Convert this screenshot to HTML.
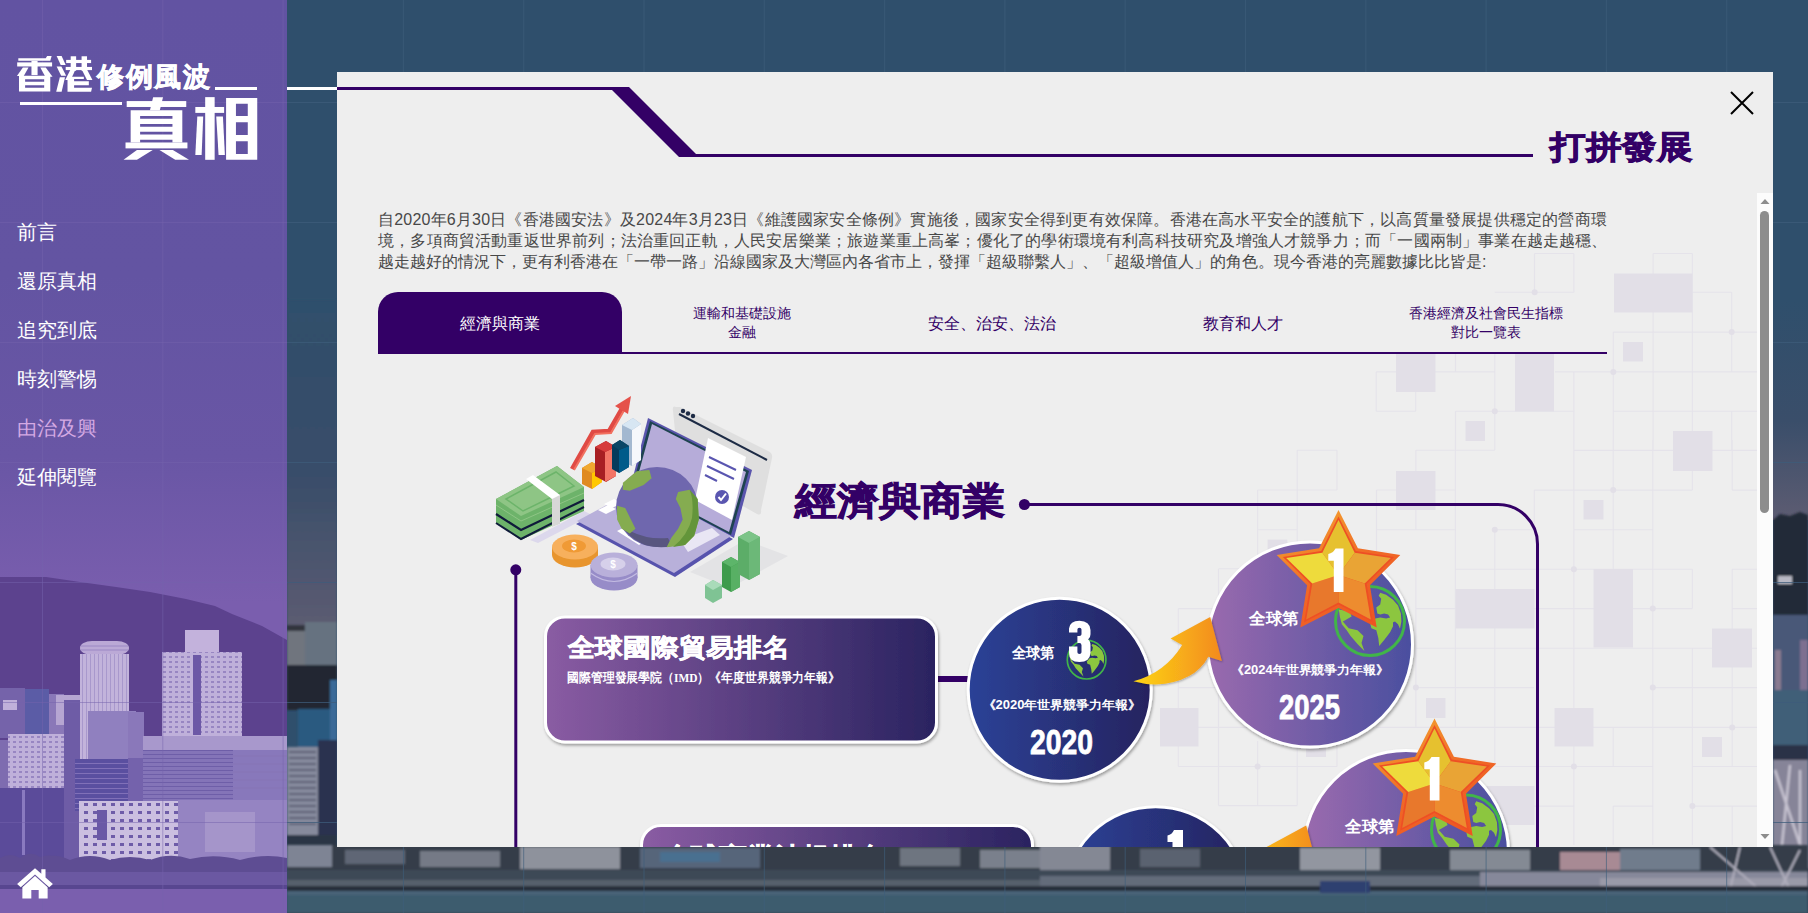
<!DOCTYPE html>
<html lang="zh-Hant">
<head>
<meta charset="utf-8">
<style>
*{box-sizing:border-box;margin:0;padding:0}
html,body{width:1808px;height:913px;overflow:hidden}
body{position:relative;background:#2f4f6c;font-family:"Liberation Sans",sans-serif}
.abs{position:absolute}
#side{left:0;top:0;width:287px;height:913px;background:linear-gradient(#6253a2 0%,#6354a2 30%,#6956a5 50%,#7a5eae 66%);overflow:hidden}
.nav{position:absolute;left:17px;color:#fff;font-size:20px;line-height:22px;white-space:nowrap}
#modal{left:337px;top:72px;width:1436px;height:775px;background:#eeeeee;overflow:hidden}
.para{position:absolute;left:41px;color:#484848;font-size:16px;line-height:21px;white-space:nowrap}
.tab{position:absolute;top:220px;height:62px;color:#330066;text-align:center;white-space:nowrap}
</style>
</head>
<body>
<!-- right background -->
<svg class="abs" style="left:0;top:0" width="1808" height="913" viewBox="0 0 1808 913">
  <defs>
    <filter id="bl1"><feGaussianBlur stdDeviation="1.2"/></filter>
    <pattern id="g1" x="42" y="102" width="120.3" height="120" patternUnits="userSpaceOnUse">
      <path d="M0 0V120M0 0H120.3" stroke="#3d5c7a" stroke-width="1.3" fill="none"/>
    </pattern>
  </defs>
  <linearGradient id="skyR" x1="0" y1="0" x2="0" y2="1"><stop offset="0" stop-color="#2f4f6c"/><stop offset="0.55" stop-color="#3a4e6a"/><stop offset="1" stop-color="#5d5c72"/></linearGradient>
  <rect x="1773" y="300" width="35" height="220" fill="url(#skyR)"/>
  <g filter="url(#bl1)">
  <!-- right strip city -->
  <path d="M1773 520 L1780 514 L1790 516 L1800 512 L1808 515 L1808 913 L1773 913Z" fill="#242a38"/>
  <rect x="1778" y="576" width="14" height="8" fill="#b8b8c4"/>
  <rect x="1773" y="615" width="35" height="78" fill="#4a5878"/>
  <rect x="1775" y="650" width="6" height="40" fill="#8a7a90"/>
  <rect x="1800" y="640" width="8" height="50" fill="#7d7090"/>
  <rect x="1773" y="690" width="35" height="55" fill="#3f5f78"/>
  <rect x="1773" y="745" width="35" height="15" fill="#2a3346"/>
  <rect x="1773" y="760" width="35" height="110" fill="#868498"/>
  <path d="M1775 770 L1805 860 M1790 765 L1780 865 M1800 770 L1800 865" stroke="#c6c2d0" stroke-width="2.5"/>
  <rect x="1773" y="868" width="35" height="22" fill="#2c3242"/>
  <!-- left strip city -->
  <rect x="287" y="300" width="50" height="330" fill="url(#skyR)"/>
  <rect x="287" y="625" width="18" height="45" fill="#70747e"/>
  <rect x="287" y="625" width="18" height="6" fill="#30343c"/>
  <rect x="305" y="622" width="32" height="45" fill="#667280"/>
  <rect x="287" y="665" width="50" height="45" fill="#212830"/>
  <rect x="298" y="709" width="34" height="40" fill="#2c5a80"/>
  <rect x="330" y="680" width="7" height="70" fill="#3a6a98"/>
  <rect x="287" y="747" width="31" height="103" fill="#868a9c"/>
  <path d="M289 752H316M289 758H316M289 764H316M289 770H316M289 776H316M289 782H316M289 788H316M289 794H316M289 800H316M289 806H316M289 812H316M289 818H316M289 824H316" stroke="#5a5e74" stroke-width="2"/>
  <rect x="318" y="740" width="19" height="110" fill="#2a3050"/>
  <rect x="287" y="835" width="50" height="15" fill="#2c3444"/>
  </g>
  <!-- bottom strip -->
  <g filter="url(#bl1)">
  <rect x="287" y="845" width="1521" height="70" fill="#343e4a"/>
  <rect x="287" y="845" width="45" height="22" fill="#7e8494"/>
  <rect x="345" y="850" width="60" height="14" fill="#5e6674"/>
  <rect x="420" y="851" width="80" height="16" fill="#747a86"/>
  <rect x="520" y="847" width="100" height="22" fill="#8e929c"/>
  <rect x="640" y="848" width="120" height="20" fill="#56657a"/>
  <rect x="660" y="852" width="60" height="10" fill="#4a7090"/>
  <rect x="900" y="848" width="60" height="18" fill="#6e7480"/>
  <rect x="980" y="850" width="60" height="18" fill="#7a808c"/>
  <rect x="1040" y="846" width="70" height="24" fill="#848894"/>
  <rect x="1140" y="849" width="60" height="18" fill="#5a6270"/>
  <rect x="1300" y="848" width="80" height="24" fill="#9296a0"/>
  <rect x="1450" y="850" width="80" height="22" fill="#848a94"/>
  <rect x="1560" y="852" width="60" height="22" fill="#a88a94"/>
  <rect x="1620" y="849" width="80" height="22" fill="#707c8c"/>
  <rect x="287" y="870" width="1521" height="16" fill="#3e4856"/>
  <rect x="287" y="880" width="760" height="6" fill="#56606c"/>
  <rect x="1040" y="876" width="440" height="12" fill="#646c7a"/>
  <rect x="1480" y="872" width="328" height="20" fill="#86889a"/>
  <rect x="1600" y="878" width="208" height="12" fill="#9a9aa8"/>
  <path d="M1710 847 L1760 890 M1740 847 L1730 890 M1770 847 L1790 890 M1800 850 L1780 890" stroke="#b0aebc" stroke-width="2"/>
  <rect x="287" y="886" width="1521" height="5" fill="#262f3a"/>
  <rect x="287" y="891" width="1521" height="22" fill="#3e5c6e"/>
  <rect x="287" y="891" width="1521" height="4" fill="#4a6478"/>
  <rect x="1320" y="881" width="50" height="12" fill="#2d4070"/>
  </g>
  <rect x="287" y="0" width="1521" height="913" fill="url(#g1)"/>
</svg>

<!-- sidebar -->
<div id="side" class="abs">
  <svg class="abs" style="left:0;top:0" width="287" height="913" viewBox="0 0 287 913">
    <defs>
      <pattern id="g2" x="42" y="102" width="120.3" height="120" patternUnits="userSpaceOnUse">
        <path d="M0 0V120M0 0H120.3" stroke="#7462ac" stroke-width="1" fill="none"/>
      </pattern>
    </defs>
    <pattern id="win1" width="6" height="5" patternUnits="userSpaceOnUse"><rect width="6" height="5" fill="#bfb0da"/><rect x="1" y="1" width="3" height="2" fill="#9886c2"/></pattern>
    <pattern id="win2" width="5" height="4" patternUnits="userSpaceOnUse"><rect width="5" height="4" fill="#8474b8"/><rect x="0" y="2" width="5" height="1" fill="#6e5ea8"/></pattern>
    <pattern id="win5" width="5" height="5" patternUnits="userSpaceOnUse"><rect width="5" height="5" fill="#5a4fa0"/><rect x="0" y="3" width="5" height="1" fill="#8070b8"/></pattern>
    <pattern id="win3" width="4" height="60" patternUnits="userSpaceOnUse"><rect width="4" height="60" fill="#c2b3db"/><rect x="2" width="1" height="60" fill="#a898cc"/></pattern>
    <pattern id="win4" width="9" height="8" patternUnits="userSpaceOnUse"><rect width="9" height="8" fill="#cbbfe0"/><rect x="3" y="3" width="4" height="3" fill="#6e5ca8"/></pattern>
    <!-- mountain -->
    <path d="M0 577 L46 577 L80 582 L116 587 L150 592 L186 599 L215 606 L232 614 L262 626 L287 640 L287 913 L0 913Z" fill="#5c428e"/>
    <!-- left cluster -->
    <rect x="0" y="688" width="25" height="50" fill="#7563aa"/>
    <rect x="3" y="700" width="14" height="10" fill="#c0b0da"/>
    <rect x="25" y="689" width="24" height="45" fill="#5b5ca6"/>
    <rect x="49" y="694" width="15" height="40" fill="#8a78b8"/>
    <rect x="56" y="695" width="26" height="30" fill="#b6a6d2"/>
    <rect x="8" y="734" width="56" height="56" fill="url(#win1)"/>
    <rect x="0" y="740" width="8" height="50" fill="#7e6cb0"/>
    <rect x="0" y="788" width="64" height="70" fill="#5b4b9a"/>
    <rect x="22" y="790" width="3" height="65" fill="#8a7ac0"/>
    <rect x="64" y="700" width="16" height="160" fill="#6e5ca6"/>
    <!-- round tower -->
    <rect x="80" y="641" width="49" height="14" rx="12" fill="#bba9d6"/>
    <path d="M81 646 H128 M81 650 H128" stroke="#9b88c4" stroke-width="1"/>
    <rect x="80" y="654" width="49" height="108" fill="url(#win3)"/>
    <rect x="88" y="711" width="48" height="50" fill="#9080bf"/>
    <rect x="128" y="712" width="16" height="48" fill="#8a78ba"/>
    <rect x="75" y="759" width="53" height="52" fill="url(#win5)"/>
    <rect x="128" y="758" width="15" height="50" fill="#7462ac"/>
    <!-- tall tower right -->
    <rect x="185" y="630" width="34" height="22" fill="#c3b2dc"/>
    <rect x="162" y="652" width="80" height="84" fill="url(#win1)"/>
    <rect x="193" y="655" width="8" height="80" fill="#6c58a6"/>
    <!-- wide lower building -->
    <rect x="143" y="736" width="147" height="14" fill="#a898cc"/>
    <rect x="143" y="750" width="90" height="52" fill="url(#win2)"/>
    <rect x="233" y="750" width="57" height="52" fill="#8878bb"/>
    <path d="M233 756 H287 M233 764 H287 M233 772 H287 M233 780 H287 M233 788 H287" stroke="#8676b8" stroke-width="1.5"/>
    <!-- white building -->
    <rect x="79" y="801" width="100" height="62" fill="url(#win4)"/>
    <rect x="97" y="810" width="10" height="30" fill="#6a58a6"/>
    <rect x="178" y="800" width="112" height="60" fill="#9584c2"/>
    <rect x="205" y="812" width="50" height="40" fill="#a595ca"/>
    <!-- trees / shore / water -->
    <path d="M0 858 Q10 852 20 858 Q30 850 40 857 Q55 853 70 860 Q90 852 110 860 Q130 854 150 860 Q170 852 190 859 Q215 853 240 860 Q265 853 287 858 V875 H0Z" fill="#5e4d93"/>
    <rect x="0" y="872" width="287" height="14" fill="#6b58a2"/>
    <rect x="0" y="885" width="287" height="4" fill="#584690"/>
    <rect x="0" y="889" width="287" height="24" fill="#7a5fae"/>
    <rect x="0" y="0" width="287" height="913" fill="url(#g2)"/>
  </svg>
  <!-- logo -->
  <svg class="abs" style="left:14px;top:54px" width="82" height="41" viewBox="0 0 1808 904" preserveAspectRatio="none">
    <g fill="#fff">
    <path d="M95 95 H700 L730 45 H830 L800 150 H95Z"/>
    <rect x="70" y="185" width="770" height="90"/>
    <rect x="385" y="150" width="135" height="315"/>
    <path d="M195 300 H320 L215 485 H65Z"/>
    <path d="M580 300 H700 L850 500 H690Z"/>
    <path d="M110 480 H800 V825 H110Z M245 555 V610 H665 V555Z M245 690 V745 H665 V690Z" fill-rule="evenodd"/>
    <path d="M940 45 H1050 L1140 240 H1030Z"/>
    <path d="M940 275 H1045 L1150 480 H1040Z"/>
    <path d="M1010 510 H1125 L1050 830 H930Z"/>
    <rect x="1250" y="50" width="120" height="320"/>
    <rect x="1490" y="50" width="120" height="320"/>
    <rect x="1150" y="130" width="550" height="70"/>
    <rect x="1140" y="285" width="580" height="70"/>
    <path d="M1240 355 H1350 L1250 575 H1130Z"/>
    <path d="M1500 355 H1615 L1730 575 H1610Z"/>
    <path d="M1180 500 H1540 V600 H1650 V690 H1325 V745 H1720 L1700 830 H1180Z M1325 550 V600 H1540 V550Z" fill-rule="evenodd"/>
    </g>
  </svg>
  <div class="abs" style="left:97px;top:59px;color:#fff;font-size:27px;font-weight:bold;line-height:36px;white-space:nowrap;-webkit-text-stroke:0.6px #fff;letter-spacing:1.5px">修例風波</div>
  <div class="abs" style="left:215px;top:86.5px;width:42px;height:3px;background:#fff"></div>
  <div class="abs" style="left:20px;top:101.5px;width:102px;height:3px;background:#fff"></div>
  <svg class="abs" style="left:120px;top:92px" width="140" height="72" viewBox="0 0 1775 913" preserveAspectRatio="none">
    <g fill="#fff">
    <path d="M420 65 H545 L505 230 H380Z"/>
    <rect x="85" y="115" width="755" height="75"/>
    <path d="M135 230 H790 V640 H135Z M255 305 V340 H665 V305Z M255 405 V440 H665 V405Z M255 505 V540 H665 V505Z M255 605 V640 H665 V605Z" fill-rule="evenodd"/>
    <rect x="70" y="640" width="785" height="75"/>
    <path d="M215 735 H415 L215 860 H45Z"/>
    <path d="M500 735 H670 L875 860 H700Z"/>
    <rect x="1080" y="65" width="120" height="795"/>
    <rect x="955" y="190" width="365" height="75"/>
    <path d="M980 310 H1055 L1035 800 H955Z"/>
    <path d="M1220 310 H1305 L1330 800 H1250Z"/>
    <path d="M1345 75 H1740 V860 H1345Z M1470 150 V305 H1620 V150Z M1470 385 V545 H1620 V385Z M1470 625 V785 H1620 V625Z" fill-rule="evenodd"/>
    </g>
  </svg>
  <!-- nav -->
  <div class="nav" style="top:221px">前言</div>
  <div class="nav" style="top:270px">還原真相</div>
  <div class="nav" style="top:319px">追究到底</div>
  <div class="nav" style="top:368px">時刻警惕</div>
  <div class="nav" style="top:417px;color:#d4a9e3">由治及興</div>
  <div class="nav" style="top:466px">延伸閱覽</div>
  <!-- home icon -->
  <svg class="abs" style="left:15px;top:866px" width="40" height="34" viewBox="0 0 38 32" preserveAspectRatio="none">
    <path d="M19 2 L2 17 L5.5 20 L19 8 L32.5 20 L36 17 L29 10.8 V3 H25 V7.2 Z" fill="#fff"/>
    <path d="M7 20 L19 9.5 L31 20 V30.5 H22.5 V22.5 H15.5 V30.5 H7 Z" fill="#fff"/>
  </svg>
</div>

<!-- connector white line -->
<div class="abs" style="left:287px;top:87px;width:50px;height:3px;background:#fff"></div>

<!-- modal -->
<div id="modal" class="abs">
  <!-- bg pattern -->
  <svg class="abs" style="left:0;top:0" width="1436" height="775" viewBox="337 72 1436 775">
    <path d="M1534.5 253.5V292.2M1573.9 253.5V292.2M1573.9 371.9V450M1653.1 253.5V450M1692.4 253.5V450M1731.7 292.2V371.9M1731.7 411.2V450M1613.3 332.1V450M1455.5 354V371.9M1455.5 411.2V450M1494.8 354V450M1415.7 371.9V411.2M1376.2 371.9V411.2M1297.2 450.3V545M1337 450.3V490.1M1257.6 490V560M1376.5 490V560M1415.9 450V529.7M1455.4 440V650M1218.5 569V805.6M1178.3 608.6V766.5M1415.9 560V650M1494.8 529.7V650M1534.3 490V529M1573.9 440V650M1613.2 440V569.3M1652.8 440V650M1692.4 470V490M1692.4 569.3V608.6M1732.2 440V490M1732.2 569.3V650M1455.4 640V727.4M1494.8 640V766.5M1573.9 640V845M1613.2 727.4V766.5M1613.2 806V845M1652.8 640V845M1692.4 648V845M1732.2 667V766.5M1732.2 806V845M1257.6 741V805.6M1297.2 727V805.6M1337 727V766.5M1415.9 648V727M1455.4 648V727M1534.5 253.5H1573.9M1653.1 253.5H1692.4M1494.8 292.2H1573.9M1692.4 292.2H1731.7M1613.3 332.1H1757M1376.2 371.9H1494.8M1555 371.9H1757M1376.2 411.2H1415.7M1455.5 411.2H1573.8M1613.3 411.2H1757M1297.2 450.3H1337M1415.9 450.3H1494.8M1257.6 490H1337M1376.5 490H1455.4M1257.6 529.7H1297.2M1376.5 529.7H1455.4M1178.3 608.6H1218.5M1218.5 568.8H1257.6M1415.9 608.6H1455.4M1573.9 450.4H1757M1534.3 490.1H1692.4M1732.2 490.1H1757M1494.8 529.7H1534M1573.9 529.7H1652.8M1455.4 569.3H1692.4M1732 569.3H1757M1455.4 608.6H1692.4M1732 608.6H1757M1415.9 648.2H1757M1415.9 687.6H1534M1652.8 687.6H1757M1376 727.4H1757M1494.8 766.5H1652.8M1692.4 766.5H1757M1534 806.1H1573.9M1613.2 806.1H1652.8M1692.4 806.1H1757M1178.3 687.6H1218M1178.3 727.4H1257.6M1178.3 766.5H1337M1218.5 805.6H1297.2" stroke="#e5e3ea" stroke-width="1.1" fill="none"/>
    <circle cx="1534.7" cy="292.2" r="3" fill="#e2dfe7"/><circle cx="1731.7" cy="332.1" r="3" fill="#e2dfe7"/><circle cx="1613.3" cy="371.9" r="3" fill="#e2dfe7"/><circle cx="1494.8" cy="411.2" r="3" fill="#e2dfe7"/><circle cx="1494.8" cy="529.7" r="3" fill="#e2dfe7"/><circle cx="1573.9" cy="569.3" r="3" fill="#e2dfe7"/><circle cx="1613.2" cy="490.1" r="3" fill="#e2dfe7"/><circle cx="1652.8" cy="608.6" r="3" fill="#e2dfe7"/><circle cx="1652.8" cy="687.6" r="3" fill="#e2dfe7"/><circle cx="1732.2" cy="727.4" r="3" fill="#e2dfe7"/><circle cx="1573.9" cy="766.5" r="3" fill="#e2dfe7"/><circle cx="1692.4" cy="806.1" r="3" fill="#e2dfe7"/><circle cx="1257.6" cy="766.5" r="3" fill="#e2dfe7"/><circle cx="1415.9" cy="687.6" r="3" fill="#e2dfe7"/>
<rect x="1614" y="273.5" width="78.5" height="39.0" fill="#e2dfe7"/>
<rect x="1396" y="354" width="39.5" height="38.0" fill="#e2dfe7"/>
<rect x="1515" y="354" width="39.0" height="57.5" fill="#e2dfe7"/>
<rect x="1623" y="342" width="20.0" height="19.5" fill="#e2dfe7"/>
<rect x="1465.5" y="421" width="19.5" height="20.0" fill="#e2dfe7"/>
<rect x="1673" y="431" width="39.5" height="40.0" fill="#e2dfe7"/>
<rect x="1396" y="471" width="39.5" height="39.0" fill="#e2dfe7"/>
<rect x="1583.5" y="500" width="20.0" height="19.5" fill="#e2dfe7"/>
<rect x="1455.5" y="589" width="79.0" height="39.5" fill="#e2dfe7"/>
<rect x="1593.5" y="569" width="39.5" height="78.5" fill="#e2dfe7"/>
<rect x="1712" y="628.5" width="40.0" height="39.0" fill="#e2dfe7"/>
<rect x="1554.5" y="708" width="39.0" height="38.5" fill="#e2dfe7"/>
<rect x="1702" y="737" width="20.0" height="20.0" fill="#e2dfe7"/>
<rect x="1426" y="698" width="19.5" height="20.0" fill="#e2dfe7"/>
<rect x="1160" y="708" width="38.5" height="38.5" fill="#e2dfe7"/>
<rect x="1484" y="786" width="50.5" height="39.0" fill="#e2dfe7"/>
<rect x="1267.6" y="539.6" width="19.7" height="19.7" fill="#e2dfe7"/>
<rect x="1306" y="737" width="20.0" height="20.0" fill="#e2dfe7"/>
  </svg>
  <svg class="abs" style="left:0;top:0" width="1436" height="100">
    <polygon points="0,15 292,15 359,82 1196,82 1196,85 342,85 275,18 0,18" fill="#330066"/>
  </svg>
  <svg class="abs" style="left:1200px;top:50px" width="170" height="50"><text x="13" y="36" font-family="Liberation Sans" font-size="32" font-weight="bold" fill="#330066" stroke="#330066" stroke-width="0.9" textLength="142" lengthAdjust="spacingAndGlyphs">打拼發展</text></svg>
  <svg class="abs" style="left:1393px;top:19px" width="24" height="24"><path d="M1 1L23 23M23 1L1 23" stroke="#000" stroke-width="2"/></svg>

  <div class="para" style="top:137px;letter-spacing:0.2px">自2020年6月30日《香港國安法》及2024年3月23日《維護國家安全條例》實施後，國家安全得到更有效保障。香港在高水平安全的護航下，以高質量發展提供穩定的營商環</div>
  <div class="para" style="top:158px;letter-spacing:0.18px">境，多項商貿活動重返世界前列；法治重回正軌，人民安居樂業；旅遊業重上高峯；優化了的學術環境有利高科技研究及增強人才競爭力；而「一國兩制」事業在越走越穩、</div>
  <div class="para" style="top:179px">越走越好的情況下，更有利香港在「一帶一路」沿線國家及大灣區內各省市上，發揮「超級聯繫人」、「超級增值人」的角色。現今香港的亮麗數據比比皆是:</div>

  <div class="abs" style="left:41px;top:220px;width:244px;height:62px;background:#330066;border-radius:20px 20px 0 0"></div>
  <div class="abs" style="left:41px;top:280px;width:1229px;height:2px;background:#330066"></div>
  <div class="tab" style="left:41px;width:244px;color:#fff;font-size:16px;line-height:64px">經濟與商業</div>
  <div class="tab" style="left:285px;width:240px;font-size:14px;line-height:19px;padding-top:12px">運輸和基礎設施<br>金融</div>
  <div class="tab" style="left:535px;width:240px;font-size:16px;line-height:64px">安全、治安、法治</div>
  <div class="tab" style="left:786px;width:240px;font-size:16px;line-height:64px">教育和人才</div>
  <div class="tab" style="left:1029px;width:240px;font-size:14px;line-height:19px;padding-top:12px">香港經濟及社會民生指標<br>對比一覽表</div>

  <!-- content -->
  <svg class="abs" style="left:0;top:0" width="1436" height="775" viewBox="337 72 1436 775">
    <!-- ILLUSTRATION -->
    <g id="illus">
      <!-- shadows -->
      <path d="M530 540 L584 511 L592 515 L538 543Z" fill="#dcd8ec"/>
      <path d="M690 572 L745 540 L788 556 L730 588Z" fill="#e3e3e5"/>
      
      <!-- browser panel -->
      <path d="M676 407 Q672 405 673 411 L679 470 L757 514 Q762 516 761 510 L772 458 Q773 453 768 451 L680 407Z" fill="#dfdfdf"/>
      <path d="M679 414 L767 460" stroke="#1d2b45" stroke-width="2"/>
      <circle cx="683" cy="411" r="2.2" fill="#1d2b45"/><circle cx="688" cy="413.5" r="2.2" fill="#1d2b45"/><circle cx="693" cy="416" r="2.2" fill="#1d2b45"/>
      <!-- laptop screen -->
      <path d="M648 418 L752 470 L734 538 L631 485Z" fill="#5a55ad"/>
      <path d="M650 421 L749 471 L731 535 L633 484Z" fill="#1e4350"/>
      <path d="M652 424 L746 472 L729 532 L636 483Z" fill="#b6acd9"/>
      <!-- laptop base -->
      <path d="M576 524 L640 490 L733 539 L675 577Z" fill="#5753ad"/>
      <path d="M577 521 L640 487 L731 536 L674 573Z" fill="#b8b0da"/>
      <path d="M604 504 L614 499 L622 503 L612 508Z M598 510 L608 505 L616 509 L606 514Z" fill="#fff"/>
      <path d="M617 531 L627 526 L648 539 L639 545Z" fill="#fff"/>
      <path d="M680 540 L712 528 L720 535 L688 552Z" fill="#e9e6f4"/>
      <!-- document -->
      <path d="M708 438 L746 457 L732 520 L695 500Z" fill="#fff"/>
      <path d="M709 457 L736 470 M707 466 L734 479 M705 475 L717 481" stroke="#5a56b0" stroke-width="2"/>
      <circle cx="722" cy="497" r="7" fill="#5a56b0"/>
      <path d="M718.5 497 L721 500 L726 493.5" stroke="#fff" stroke-width="2" fill="none"/>
      <!-- globe -->
      <ellipse cx="657" cy="507" rx="41" ry="40" fill="#6f67ae"/>
      <path d="M617 513 Q622 535 645 545 Q660 549 672 546 L668 538 Q648 540 630 531 Q620 524 617 513Z" fill="#58567f"/>
      <path d="M622.9 482.8 L636.7 471.3 L649.3 470.1 L651.6 478.2 L643.6 485.1 L629.8 490.8 L622.9 489.7Z" fill="#85ac50"/>
      <path d="M617.1 505.8 L625.2 508.1 L630.9 519.6 L635.5 528.8 L629.8 533.4 L621.7 528.8 L617.1 519.6Z" fill="#85ac50"/>
      <path d="M678.1 492 L689.6 489.7 L697.6 498.9 L698.8 519.6 L694.2 535.7 L685 544.9 L666.6 547.2 L671.2 538 L678.1 528.8 L682.7 519.6 L680.4 508.1 L675.8 498.9Z" fill="#85ac50"/>
      <path d="M689.6 489.7 L697.6 498.9 L698.8 519.6 L694.2 535.7 L685 544.9 L673 547 Q688 535 692 518 Q694 500 689.6 489.7Z" fill="#63953a"/>
      <!-- money stack -->
      <path d="M496 499 L557 466 L584 487 L584 511 L521 540 L496 523Z" fill="#6db36a"/>
      <path d="M496 499 L557 466 L584 487 L521 516Z" fill="#8ec585"/>
      <path d="M506 499 L556 472 L574 486 L523 511Z" fill="none" stroke="#6cb46a" stroke-width="1.5"/>
      <path d="M496 514 L521 530 L584 500" stroke="#0f1a3a" stroke-width="2.2" fill="none"/>
      <path d="M496 523 L521 539 L584 507" stroke="#0f1a3a" stroke-width="2" fill="none"/>
      <path d="M496 505 L521 521 L584 493" stroke="#8ec585" stroke-width="1" fill="none"/>
      <path d="M526 479 L533 475 L560 495 L560 524 L552 527 L552 499Z" fill="#fff"/>
      <path d="M552 499 L560 495 L560 524 L552 527Z" fill="#d7d7d7"/>
      <!-- bars -->
      <path d="M582 468 L592 462 L602 468 L602 482 L592 489 L582 484Z" fill="#e08a20"/>
      <path d="M592 473 L602 468 L602 482 L592 489Z" fill="#ffc800"/>
      <path d="M582 468 L592 462 L602 468 L592 473Z" fill="#f0a830"/>
      <path d="M595 447 L606 441 L616 447 L616 476 L606 482 L595 476Z" fill="#a81f23"/>
      <path d="M605 452 L616 447 L616 476 L605 482Z" fill="#f37567"/>
      <path d="M595 447 L606 441 L616 447 L605 452Z" fill="#d63c3c"/>
      <path d="M622 425 L633 418 L641 424 L641 460 L632 466 L622 462Z" fill="#a3b8d0"/>
      <path d="M632 430 L641 424 L641 460 L632 466Z" fill="#f5f7fb"/>
      <path d="M622 425 L633 418 L641 424 L632 430Z" fill="#d7e6f3"/>
      <path d="M612 445 L620 440 L629 446 L629 467 L619 473 L612 469Z" fill="#053b5c"/>
      <path d="M619 450 L629 446 L629 467 L619 473Z" fill="#005b8a"/>
      <path d="M612 445 L620 440 L629 446 L619 450Z" fill="#0a4565"/>
      <!-- red arrow -->
      <path d="M572 469 L593 432 L609 431 L624 405" stroke="#e04a44" stroke-width="4.5" fill="none" stroke-linejoin="miter"/>
      <path d="M574 470 L595 434 L611 433 L626 407" stroke="#f2705f" stroke-width="2" fill="none"/>
      <path d="M615 406 L631 396 L628 414Z" fill="#e5514a"/>
      <!-- coins -->
      <ellipse cx="575" cy="555" rx="23" ry="12.5" fill="#e8952e"/>
      <rect x="552" y="547" width="46" height="8" fill="#e8952e"/>
      <ellipse cx="575" cy="547" rx="23" ry="12.5" fill="#f7b05d"/>
      <ellipse cx="574" cy="546" rx="12" ry="6.5" fill="#f09a35"/>
      <text x="574" y="550" font-size="10" font-weight="bold" fill="#fff" text-anchor="middle" font-family="Liberation Sans">$</text>
      <ellipse cx="614" cy="578" rx="23.5" ry="12.5" fill="#978cc8"/>
      <rect x="590.5" y="565" width="47" height="13" fill="#978cc8"/>
      <path d="M590.5 573 Q614 590 637.5 573" stroke="#c3bbe2" stroke-width="1.2" fill="none"/>
      <ellipse cx="614" cy="565" rx="23.5" ry="12.5" fill="#b9b0da"/>
      <ellipse cx="613" cy="564" rx="12.5" ry="6.5" fill="#d6d0ea"/>
      <text x="613" y="568" font-size="10" font-weight="bold" fill="#fff" text-anchor="middle" font-family="Liberation Sans">$</text>
      <!-- green bars -->
      <path d="M705 585 L713 580 L722 585 L722 598 L713 603 L705 598Z" fill="#7fc394"/>
      <path d="M705 585 L713 580 L722 585 L713 590Z" fill="#a9dbb9"/>
      <path d="M722 562 L731 557 L740 562 L740 587 L731 592 L722 587Z" fill="#3e9b4c"/>
      <path d="M731 567 L740 562 L740 587 L731 592Z" fill="#58b064"/>
      <path d="M722 562 L731 557 L740 562 L731 567Z" fill="#5db56a"/>
      <path d="M738 537 L749 531 L760 537 L760 574 L749 580 L738 574Z" fill="#5cad68"/>
      <path d="M749 543 L760 537 L760 574 L749 580Z" fill="#6cb878"/>
      <path d="M738 537 L749 531 L760 537 L749 543Z" fill="#7cc488"/>
    </g>
    <!-- ROWS -->
<defs>
<linearGradient id="cardg" x1="0" x2="1" y1="0" y2="0"><stop offset="0" stop-color="#8a5ca3"/><stop offset="1" stop-color="#2a2360"/></linearGradient>
<linearGradient id="c1g" x1="0" x2="1" y1="0" y2="0"><stop offset="0" stop-color="#2c4297"/><stop offset="1" stop-color="#25235f"/></linearGradient>
<linearGradient id="c2g" x1="0" x2="1" y1="0" y2="0"><stop offset="0" stop-color="#9a6aae"/><stop offset="1" stop-color="#4a4f9f"/></linearGradient>
<linearGradient id="arg" x1="0" x2="1" y1="0" y2="0"><stop offset="0" stop-color="#fdd514"/><stop offset="1" stop-color="#f38a1f"/></linearGradient>
<linearGradient id="stg" x1="0.2" y1="0" x2="0.8" y2="1"><stop offset="0" stop-color="#f3a42f"/><stop offset="0.5" stop-color="#f06a26"/><stop offset="1" stop-color="#ee5322"/></linearGradient>
<filter id="sh" x="-10%" y="-10%" width="125%" height="125%"><feDropShadow dx="1" dy="2" stdDeviation="1.5" flood-color="#000" flood-opacity="0.35"/></filter>
<filter id="sh2" x="-10%" y="-10%" width="125%" height="125%"><feDropShadow dx="1" dy="1" stdDeviation="1" flood-color="#000" flood-opacity="0.3"/></filter>
</defs>
<text x="795" y="513.5" font-family="Liberation Sans" font-size="38" font-weight="bold" fill="#330066" stroke="#330066" stroke-width="0.9" textLength="209.5" lengthAdjust="spacingAndGlyphs">經濟與商業</text>
<circle cx="1024.4" cy="504.5" r="5.5" fill="#330066"/>
<path d="M1024 504.5 H1498 A39.5 39.5 0 0 1 1537.5 544 V860" stroke="#330066" stroke-width="3" fill="none"/>
<circle cx="515.8" cy="569.8" r="5.5" fill="#330066"/>
<path d="M515.8 570 V860" stroke="#330066" stroke-width="3" fill="none"/>
<g transform="translate(0,0)">
<rect x="936" y="676" width="34" height="6" fill="#330066"/>
<rect x="545.5" y="616.9" width="391" height="125" rx="19.5" fill="url(#cardg)" stroke="#fff" stroke-width="3" filter="url(#sh)"/>
<circle cx="1059.7" cy="689.7" r="91.5" fill="url(#c1g)" stroke="#fff" stroke-width="3" filter="url(#sh)"/>
<g transform="translate(1086.6,659.7) scale(0.56) translate(-1370,-621)"><circle cx="1370" cy="621" r="34.5" fill="none" stroke="#41b549" stroke-width="3"/>
<path d="M1338.8 609.5 L1349.7 611.5 L1351.6 616.4 L1344.7 620.4 L1342.8 621.4 L1348.7 628.3 L1357.5 630.2 L1363.5 636.1 L1361.5 643 L1364.4 650.9 L1357.5 644 L1350.6 636.1 L1346.7 630.2 L1341.8 624.3 L1339.8 616.4Z" fill="#8cc63f"/>
<path d="M1380.2 592.8 L1386.1 594.7 L1393 599.7 L1398 605.6 L1400.9 613.5 L1401.4 621.4 L1400 628.7 L1398 624.3 L1395 621.4 L1393 622.3 L1393 626.3 L1390.1 632.2 L1384.2 640.1 L1379.2 646 L1378.3 638.1 L1376.3 630.2 L1371.4 628.3 L1370.4 624.3 L1375.3 618.4 L1380.2 617.4 L1386.1 618.4 L1390.1 617.4 L1388.1 614.4 L1384.2 613.5 L1380.2 614.4 L1377.3 613.5 L1376.3 607.5 L1380.2 604.6 L1381.2 598.7 L1378.7 595.7Z" fill="#8cc63f"/></g>
<circle cx="1310" cy="644.5" r="102.5" fill="url(#c2g)" stroke="#fff" stroke-width="3" filter="url(#sh)"/>
<circle cx="1370" cy="621" r="34.5" fill="none" stroke="#41b549" stroke-width="3"/>
<path d="M1338.8 609.5 L1349.7 611.5 L1351.6 616.4 L1344.7 620.4 L1342.8 621.4 L1348.7 628.3 L1357.5 630.2 L1363.5 636.1 L1361.5 643 L1364.4 650.9 L1357.5 644 L1350.6 636.1 L1346.7 630.2 L1341.8 624.3 L1339.8 616.4Z" fill="#8cc63f"/>
<path d="M1380.2 592.8 L1386.1 594.7 L1393 599.7 L1398 605.6 L1400.9 613.5 L1401.4 621.4 L1400 628.7 L1398 624.3 L1395 621.4 L1393 622.3 L1393 626.3 L1390.1 632.2 L1384.2 640.1 L1379.2 646 L1378.3 638.1 L1376.3 630.2 L1371.4 628.3 L1370.4 624.3 L1375.3 618.4 L1380.2 617.4 L1386.1 618.4 L1390.1 617.4 L1388.1 614.4 L1384.2 613.5 L1380.2 614.4 L1377.3 613.5 L1376.3 607.5 L1380.2 604.6 L1381.2 598.7 L1378.7 595.7Z" fill="#8cc63f"/>
<path d="M1133.4 681.3 Q1165 673 1182.2 645 L1170.6 638.5 L1210.2 617.1 L1221.8 660.9 L1208.3 656.7 Q1195 682 1155.7 684.6 Q1145 684.5 1133.4 681.3Z" fill="url(#arg)" filter="url(#sh2)"/>
<polygon points="1338.5,510.0 1357.9,548.3 1400.3,554.9 1369.9,585.2 1376.7,627.6 1338.5,608.0 1300.3,627.6 1307.1,585.2 1276.7,554.9 1319.1,548.3" fill="url(#stg)"/>
<polygon points="1338.5,516.5 1355.8,551.1 1394.1,556.9 1366.6,584.1 1372.9,622.3 1338.5,604.5 1304.1,622.3 1310.4,584.1 1282.9,556.9 1321.2,551.1" fill="#ee4f25"/>
<polygon points="1338.5,575.0 1322.3,552.8 1338.5,520.0 1354.7,552.8" fill="#e6c12f"/>
<polygon points="1338.5,575.0 1354.7,552.8 1390.8,558.0 1364.7,583.5" fill="#e9a435"/>
<polygon points="1338.5,575.0 1364.7,583.5 1370.8,619.5 1338.5,602.5" fill="#ed8c2f"/>
<polygon points="1338.5,575.0 1338.5,602.5 1306.2,619.5 1312.3,583.5" fill="#e8782c"/>
<polygon points="1338.5,575.0 1312.3,583.5 1286.2,558.0 1322.3,552.8" fill="#eedb3c"/>
<text x="567.5" y="656" font-family="Liberation Sans" font-size="25" font-weight="bold" fill="#fff" stroke="#fff" stroke-width="0.5" textLength="222" lengthAdjust="spacingAndGlyphs">全球國際貿易排名</text>
<text x="567" y="681.5" font-family="Liberation Serif, serif" font-size="12.5" font-weight="bold" fill="#fff" textLength="273" lengthAdjust="spacingAndGlyphs">國際管理發展學院（IMD）《年度世界競爭力年報》</text>
<text x="1011.5" y="657.5" font-family="Liberation Sans" font-size="14.5" font-weight="bold" fill="#fff" textLength="43" lengthAdjust="spacingAndGlyphs">全球第</text>
<path d="M1069 632.4 V628.4 Q1070 621 1079.4 620.8 Q1090 621 1090.5 630.1 V634.2 Q1090.5 638 1088.1 639.4 Q1090.5 641 1090.5 645.2 V652.7 Q1090 662 1079.4 662 Q1069 662 1069 652.7 V646.6 H1077.4 V652.2 Q1077.4 654 1079.4 654 Q1081.5 654 1081.5 652.2 V645.2 Q1081.5 642.9 1079.4 642.9 H1077.4 V635.9 H1079.4 Q1081.5 635.9 1081.5 634.2 V629.5 Q1081.5 627.8 1079.4 627.8 Q1077.4 627.8 1077.4 629.5 V632.4Z" fill="#fff"/>
<text x="982.5" y="709" font-family="Liberation Sans" font-size="12" font-weight="bold" fill="#fff" textLength="159" lengthAdjust="spacingAndGlyphs">《2020年世界競爭力年報》</text>
<text x="1030" y="754" font-family="Liberation Sans" font-size="35" font-weight="bold" fill="#fff" stroke="#fff" stroke-width="0.8" textLength="63" lengthAdjust="spacingAndGlyphs">2020</text>
<text x="1249" y="623.5" font-family="Liberation Sans" font-size="16" font-weight="bold" fill="#fff" textLength="49.5" lengthAdjust="spacingAndGlyphs">全球第</text>
<path d="M1335.5 548.5 H1343.5 V592 H1333.8 V560.8 H1328.3 V554 Q1333 553 1335.5 548.5Z" fill="#fff"/>
<text x="1231" y="674" font-family="Liberation Sans" font-size="12" font-weight="bold" fill="#fff" textLength="158" lengthAdjust="spacingAndGlyphs">《2024年世界競爭力年報》</text>
<text x="1279" y="719.2" font-family="Liberation Sans" font-size="35" font-weight="bold" fill="#fff" stroke="#fff" stroke-width="0.8" textLength="61" lengthAdjust="spacingAndGlyphs">2025</text>
</g>
<g transform="translate(96,208.5)">
<rect x="936" y="676" width="34" height="6" fill="#330066"/>
<rect x="545.5" y="616.9" width="391" height="125" rx="19.5" fill="url(#cardg)" stroke="#fff" stroke-width="3" filter="url(#sh)"/>
<circle cx="1059.7" cy="689.7" r="91.5" fill="url(#c1g)" stroke="#fff" stroke-width="3" filter="url(#sh)"/>
<g transform="translate(1086.6,659.7) scale(0.56) translate(-1370,-621)"><circle cx="1370" cy="621" r="34.5" fill="none" stroke="#41b549" stroke-width="3"/>
<path d="M1338.8 609.5 L1349.7 611.5 L1351.6 616.4 L1344.7 620.4 L1342.8 621.4 L1348.7 628.3 L1357.5 630.2 L1363.5 636.1 L1361.5 643 L1364.4 650.9 L1357.5 644 L1350.6 636.1 L1346.7 630.2 L1341.8 624.3 L1339.8 616.4Z" fill="#8cc63f"/>
<path d="M1380.2 592.8 L1386.1 594.7 L1393 599.7 L1398 605.6 L1400.9 613.5 L1401.4 621.4 L1400 628.7 L1398 624.3 L1395 621.4 L1393 622.3 L1393 626.3 L1390.1 632.2 L1384.2 640.1 L1379.2 646 L1378.3 638.1 L1376.3 630.2 L1371.4 628.3 L1370.4 624.3 L1375.3 618.4 L1380.2 617.4 L1386.1 618.4 L1390.1 617.4 L1388.1 614.4 L1384.2 613.5 L1380.2 614.4 L1377.3 613.5 L1376.3 607.5 L1380.2 604.6 L1381.2 598.7 L1378.7 595.7Z" fill="#8cc63f"/></g>
<circle cx="1310" cy="644.5" r="102.5" fill="url(#c2g)" stroke="#fff" stroke-width="3" filter="url(#sh)"/>
<circle cx="1370" cy="621" r="34.5" fill="none" stroke="#41b549" stroke-width="3"/>
<path d="M1338.8 609.5 L1349.7 611.5 L1351.6 616.4 L1344.7 620.4 L1342.8 621.4 L1348.7 628.3 L1357.5 630.2 L1363.5 636.1 L1361.5 643 L1364.4 650.9 L1357.5 644 L1350.6 636.1 L1346.7 630.2 L1341.8 624.3 L1339.8 616.4Z" fill="#8cc63f"/>
<path d="M1380.2 592.8 L1386.1 594.7 L1393 599.7 L1398 605.6 L1400.9 613.5 L1401.4 621.4 L1400 628.7 L1398 624.3 L1395 621.4 L1393 622.3 L1393 626.3 L1390.1 632.2 L1384.2 640.1 L1379.2 646 L1378.3 638.1 L1376.3 630.2 L1371.4 628.3 L1370.4 624.3 L1375.3 618.4 L1380.2 617.4 L1386.1 618.4 L1390.1 617.4 L1388.1 614.4 L1384.2 613.5 L1380.2 614.4 L1377.3 613.5 L1376.3 607.5 L1380.2 604.6 L1381.2 598.7 L1378.7 595.7Z" fill="#8cc63f"/>
<path d="M1133.4 681.3 Q1165 673 1182.2 645 L1170.6 638.5 L1210.2 617.1 L1221.8 660.9 L1208.3 656.7 Q1195 682 1155.7 684.6 Q1145 684.5 1133.4 681.3Z" fill="url(#arg)" filter="url(#sh2)"/>
<polygon points="1338.5,510.0 1357.9,548.3 1400.3,554.9 1369.9,585.2 1376.7,627.6 1338.5,608.0 1300.3,627.6 1307.1,585.2 1276.7,554.9 1319.1,548.3" fill="url(#stg)"/>
<polygon points="1338.5,516.5 1355.8,551.1 1394.1,556.9 1366.6,584.1 1372.9,622.3 1338.5,604.5 1304.1,622.3 1310.4,584.1 1282.9,556.9 1321.2,551.1" fill="#ee4f25"/>
<polygon points="1338.5,575.0 1322.3,552.8 1338.5,520.0 1354.7,552.8" fill="#e6c12f"/>
<polygon points="1338.5,575.0 1354.7,552.8 1390.8,558.0 1364.7,583.5" fill="#e9a435"/>
<polygon points="1338.5,575.0 1364.7,583.5 1370.8,619.5 1338.5,602.5" fill="#ed8c2f"/>
<polygon points="1338.5,575.0 1338.5,602.5 1306.2,619.5 1312.3,583.5" fill="#e8782c"/>
<polygon points="1338.5,575.0 1312.3,583.5 1286.2,558.0 1322.3,552.8" fill="#eedb3c"/>
<text x="567.5" y="656" font-family="Liberation Sans" font-size="25" font-weight="bold" fill="#fff" stroke="#fff" stroke-width="0.5" textLength="222" lengthAdjust="spacingAndGlyphs">全球商業法規排名</text>
<text x="567" y="681.5" font-family="Liberation Serif, serif" font-size="12.5" font-weight="bold" fill="#fff" textLength="273" lengthAdjust="spacingAndGlyphs">世界銀行《營商環境報告》</text>
<text x="1011.5" y="657.5" font-family="Liberation Sans" font-size="14.5" font-weight="bold" fill="#fff" textLength="43" lengthAdjust="spacingAndGlyphs">全球第</text>
<path d="M1078 621.5 H1087 V662 H1076.5 V633.5 H1071.5 V627 Q1076 626 1078 621.5Z" fill="#fff"/>
<text x="982.5" y="709" font-family="Liberation Sans" font-size="12" font-weight="bold" fill="#fff" textLength="159" lengthAdjust="spacingAndGlyphs">《2020年報告》</text>
<text x="1030" y="754" font-family="Liberation Sans" font-size="35" font-weight="bold" fill="#fff" stroke="#fff" stroke-width="0.8" textLength="63" lengthAdjust="spacingAndGlyphs">2020</text>
<text x="1249" y="623.5" font-family="Liberation Sans" font-size="16" font-weight="bold" fill="#fff" textLength="49.5" lengthAdjust="spacingAndGlyphs">全球第</text>
<path d="M1335.5 548.5 H1343.5 V592 H1333.8 V560.8 H1328.3 V554 Q1333 553 1335.5 548.5Z" fill="#fff"/>
<text x="1231" y="674" font-family="Liberation Sans" font-size="12" font-weight="bold" fill="#fff" textLength="158" lengthAdjust="spacingAndGlyphs">《2024年報告》</text>
<text x="1279" y="719.2" font-family="Liberation Sans" font-size="35" font-weight="bold" fill="#fff" stroke="#fff" stroke-width="0.8" textLength="61" lengthAdjust="spacingAndGlyphs">2025</text>
</g>
    <!-- /ROWS -->
  </svg>
  <!-- scrollbar -->
  <div class="abs" style="left:1420px;top:121px;width:16px;height:654px;background:#fcfcfc"></div>
  <div class="abs" style="left:1423px;top:139px;width:9px;height:302px;background:#8d8d8d;border-radius:5px"></div>
  <svg class="abs" style="left:1420px;top:121px" width="16" height="654">
    <path d="M3.5 11H12.5L8 6Z" fill="#8d8d8d"/>
    <path d="M3.5 762H12.5L8 767Z" transform="translate(0,-121)" fill="#8d8d8d"/>
  </svg>
</div>
</body>
</html>
